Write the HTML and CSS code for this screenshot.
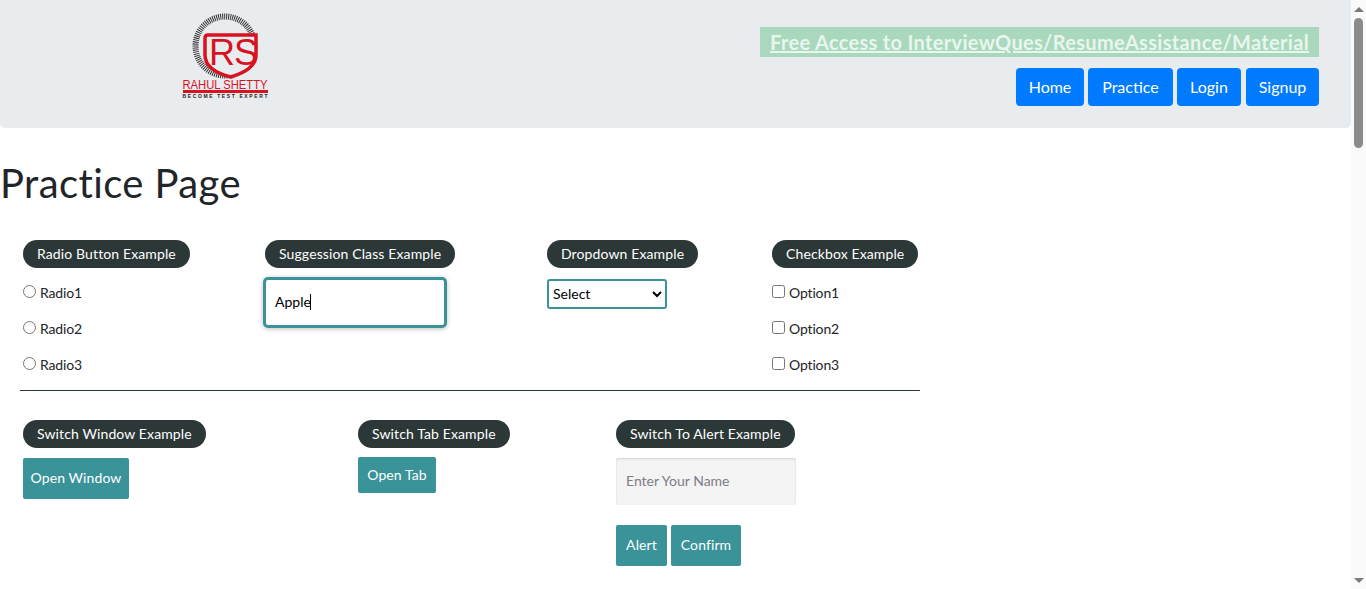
FILE: index.html
```html
<!DOCTYPE html>
<html lang="en">
<head>
  <meta charset="UTF-8" />
  <meta name="viewport" content="width=device-width, initial-scale=1.0"/>
  <title>Practice Page</title>
  <link rel="stylesheet" href="styles.css">
</head>
<body>
  <div class="page">
    <header class="site-header">
      <svg class="logo" width="110" height="100" viewBox="0 0 110 100" role="img" aria-label="Rahul Shetty Academy">
        <circle class="logo-ring" cx="55" cy="41" r="29.5"/>
        <circle class="logo-ring-mask" cx="55" cy="41" r="26"/>
        <path class="logo-shield" d="M35 33 Q35 30 38 30 H86 V50 C86 62 74 68 61 72 C49 69 35 63 35 50 Z"/>
        <text class="logo-rs" x="39" y="60">RS</text>
        <text class="logo-name" x="55" y="84" text-anchor="middle" textLength="85" lengthAdjust="spacingAndGlyphs">RAHUL SHETTY</text>
        <rect class="logo-bar" x="13" y="85" width="85" height="3"/>
        <text class="logo-tag" x="55" y="93" text-anchor="middle" textLength="85" lengthAdjust="spacing">BECOME TEST EXPERT</text>
      </svg>
      <div class="header-right">
        <a class="free-access" href="#">Free Access to InterviewQues/ResumeAssistance/Material</a>
        <nav class="nav-links">
          <a class="nav-btn nav-home" href="#">Home</a>
          <a class="nav-btn nav-practice" href="#">Practice</a>
          <a class="nav-btn nav-login" href="#">Login</a>
          <a class="nav-btn nav-signup" href="#">Signup</a>
        </nav>
      </div>
    </header>

    <h1>Practice Page</h1>

    <section class="row row-one">
      <div class="cell">
        <div class="legend">Radio Button Example</div>
        <label class="choice"><input type="radio" name="radio">Radio1</label>
        <label class="choice"><input type="radio" name="radio">Radio2</label>
        <label class="choice"><input type="radio" name="radio">Radio3</label>
      </div>
      <div class="cell">
        <div class="legend">Suggession Class Example</div>
        <div class="suggest-wrap">
          <input class="suggest" type="text" value="Apple">
          <span class="caret"></span>
        </div>
      </div>
      <div class="cell">
        <div class="legend">Dropdown Example</div>
        <select class="dropdown"><option>Select</option></select>
      </div>
      <div class="cell">
        <div class="legend">Checkbox Example</div>
        <label class="choice"><input type="checkbox">Option1</label>
        <label class="choice"><input type="checkbox">Option2</label>
        <label class="choice"><input type="checkbox">Option3</label>
      </div>
    </section>

    <hr>

    <section class="row row-two">
      <div class="cell">
        <div class="legend">Switch Window Example</div>
        <button class="btn btn-window">Open Window</button>
      </div>
      <div class="cell">
        <div class="legend">Switch Tab Example</div>
        <button class="btn btn-tab">Open Tab</button>
      </div>
      <div class="cell">
        <div class="legend">Switch To Alert Example</div>
        <input class="name-input" type="text" placeholder="Enter Your Name">
        <div class="alert-btns">
          <button class="btn btn-alert">Alert</button>
          <button class="btn btn-confirm">Confirm</button>
        </div>
      </div>
    </section>
  </div>

  <div class="scrollbar">
    <span class="arrow-up"></span>
    <span class="thumb"></span>
    <span class="arrow-down"></span>
  </div>
</body>
</html>
```

FILE: styles.css
```css
* {
  box-sizing: border-box;
}

html, body {
  height: 100%;
}

body {
  margin: 0;
  display: flex;
  overflow: hidden;
  font-family: Lato, "Noto Sans", sans-serif;
  color: #212529;
  background: #fff;
}

.page {
  width: 1351px;
  flex: none;
}

.site-header {
  height: 128px;
  background: #e9ecef;
  border-radius: 0 0 5px 5px;
  display: flex;
  justify-content: space-between;
  padding: 0 32px 0 170px;
}

.logo {
  margin-top: 5px;
}

.logo-ring {
  fill: none;
  stroke: #333;
  stroke-width: 6;
  stroke-dasharray: 1 1;
}

.logo-ring-mask {
  fill: #e9ecef;
}

.logo-shield {
  fill: #e9ecef;
  stroke: #d8121f;
  stroke-width: 3.5;
}

.logo-rs {
  font-family: "Liberation Sans", sans-serif;
  font-size: 36px;
  letter-spacing: -1px;
  fill: #d8121f;
}

.logo-name {
  font-family: "Liberation Sans", sans-serif;
  font-size: 12.5px;
  fill: #d8121f;
}

.logo-bar {
  fill: #d8121f;
}

.logo-tag {
  font-family: "Liberation Sans", sans-serif;
  font-weight: bold;
  font-size: 5px;
  fill: #222;
}

.header-right {
  display: flex;
  flex-direction: column;
  align-items: flex-end;
  padding-top: 27px;
}

.free-access {
  height: 30px;
  line-height: 30px;
  padding: 0 10px;
  background: #a9d8bc;
  color: #e8f6ee;
  font-size: 20px;
  font-weight: bold;
  letter-spacing: 0.32px;
  text-decoration: underline;
}

.nav-links {
  display: flex;
  gap: 4px;
  margin-top: 11px;
}

.nav-btn {
  height: 38px;
  line-height: 37px;
  text-align: center;
  background: #007bff;
  color: #fff;
  border-radius: 4px;
  font-size: 16px;
  text-decoration: none;
}

.nav-home {
  width: 68px;
}

.nav-practice {
  width: 85px;
}

.nav-login {
  width: 64px;
}

.nav-signup {
  width: 73px;
  margin-left: 1px;
}

h1 {
  margin: 0;
  padding-top: 28px;
  height: 112px;
  font-size: 40px;
  font-weight: 400;
  line-height: 54px;
  letter-spacing: 0.4px;
}

.row {
  display: grid;
  padding-left: 23px;
}

.row-one {
  grid-template-columns: 242px 282px 225px auto;
  height: 150px;
}

.row-two {
  grid-template-columns: 335px 258px auto;
  margin-top: 29px;
}

.row-two .legend {
  line-height: 27px;
}

.cell {
  display: flex;
  flex-direction: column;
  align-items: flex-start;
}

.legend {
  height: 28px;
  line-height: 28px;
  padding: 0 14px;
  margin-bottom: 7px;
  background: #2c3737;
  color: #fff;
  border-radius: 14px;
  font-size: 14px;
  letter-spacing: 0.12px;
  white-space: nowrap;
}

.choice {
  display: flex;
  align-items: center;
  height: 36px;
  padding-bottom: 2px;
  font-size: 14px;
  letter-spacing: -0.15px;
}

.choice input {
  margin: 0 4px 1px 0;
}

.suggest-wrap {
  position: relative;
  margin: 2px 0 0 -2px;
}

.suggest {
  display: block;
  width: 184px;
  height: 51px;
  padding: 0 9px 2px;
  border: 3px solid #3a9399;
  border-radius: 5px;
  box-shadow: 0 1px 5px rgba(0, 0, 0, 0.25);
  font-family: inherit;
  font-size: 14px;
  color: #000;
  outline: none;
}

.caret {
  position: absolute;
  left: 47px;
  top: 17px;
  width: 1px;
  height: 16px;
  background: #000;
}

.dropdown {
  display: block;
  width: 120px;
  height: 30px;
  margin-top: 4px;
  padding: 0 0 2px;
  border: 2px solid #3a9399;
  border-radius: 3px;
  background: #fff;
  font-family: inherit;
  font-size: 14px;
  color: #000;
}

hr {
  width: 900px;
  margin: 0 0 0 20px;
  border: none;
  border-top: 1px solid #2c3737;
}

.btn {
  padding: 0 0 2px;
  border: none;
  border-radius: 2px;
  background: #3a9399;
  color: #fff;
  font-family: inherit;
  font-size: 14px;
  letter-spacing: 0.1px;
  height: 41px;
  white-space: nowrap;
}

.btn-window {
  width: 106px;
  margin-top: 3px;
}

.btn-tab {
  width: 78px;
  height: 36px;
  margin-top: 2px;
}

.btn-alert {
  width: 51px;
}

.btn-confirm {
  width: 70px;
}

.name-input {
  width: 180px;
  height: 47px;
  margin-top: 3px;
  padding: 0 10px 2px;
  border: none;
  border-radius: 2px;
  box-shadow: inset 0 1px 2px rgba(0, 0, 0, 0.15);
  background: #f4f4f4;
  font-family: inherit;
  font-size: 14px;
}

.name-input::placeholder {
  color: #7d7d85;
}

.alert-btns {
  display: flex;
  gap: 4px;
  margin-top: 20px;
}

.scrollbar {
  width: 15px;
  flex: none;
  background: #fafafa;
  display: flex;
  flex-direction: column;
  align-items: center;
  padding-top: 7px;
}

.thumb {
  width: 9px;
  height: 130px;
  margin-top: 6px;
  border-radius: 5px;
  background: #8b8b8b;
}

.arrow-up {
  border: 5px solid transparent;
  border-top: none;
  border-bottom: 5px solid #7a7a7a;
}

.arrow-down {
  border: 5px solid transparent;
  border-bottom: none;
  border-top: 5px solid #7a7a7a;
  margin-top: auto;
  margin-bottom: 6px;
}
```
